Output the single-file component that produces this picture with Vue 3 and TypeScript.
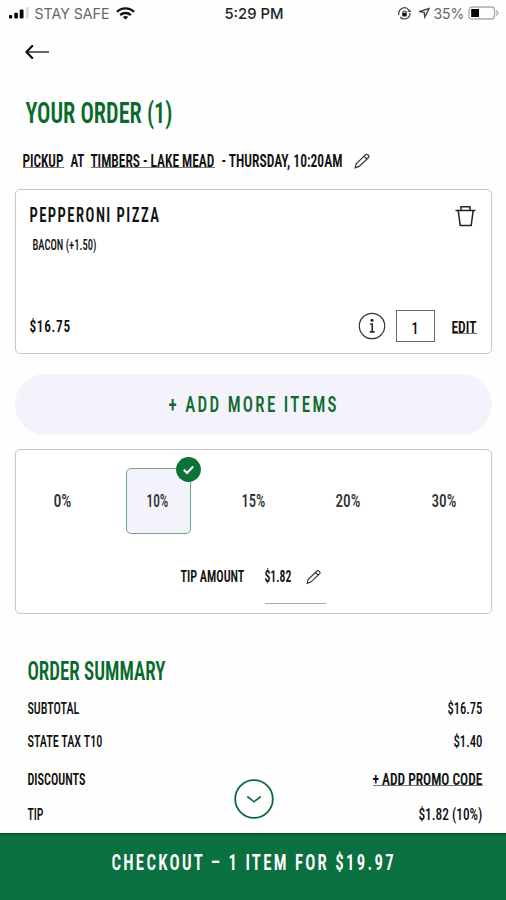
<script setup lang="ts">
import { h, ref } from 'vue'

interface LabelProps {
  text: string
  w: number
  cap: number
  track?: number
}

// Condensed label: its box is exactly the cap height of the text, fitted to width w.
const Label = (props: LabelProps) => {
  const size = props.cap / 0.711
  return h('svg', { class: 'label', width: props.w, height: props.cap }, [
    h(
      'text',
      {
        x: -0.6,
        y: props.cap,
        'font-size': size,
        'letter-spacing': props.track ?? 0,
        textLength: props.w + (props.track ?? 0) * 0.5,
        lengthAdjust: 'spacingAndGlyphs',
      },
      props.text,
    ),
  ])
}
Label.props = ['text', 'w', 'cap', 'track']

const tips = [
  { text: '0%', w: 18 },
  { text: '10%', w: 22 },
  { text: '15%', w: 24 },
  { text: '20%', w: 25 },
  { text: '30%', w: 25 },
]
const selected = ref(1)

const rows = [
  { key: 'subtotal', name: 'SUBTOTAL', nw: 52, value: '$16.75', vw: 35 },
  { key: 'tax', name: 'STATE TAX T10', nw: 75, value: '$1.40', vw: 29 },
  { key: 'discounts', name: 'DISCOUNTS', nw: 58, value: '+ ADD PROMO CODE', vw: 110, link: true },
  { key: 'gratuity', name: 'TIP', nw: 16, value: '$1.82 (10%)', vw: 64 },
]
</script>

<template>
  <div class="page">
    <header class="status">
      <div class="carrier">
        <svg width="20" height="12" viewBox="0 0 20 12">
          <rect x="0" y="8" width="3.2" height="3.5" rx="1" />
          <rect x="5.3" y="5.7" width="3.6" height="5.8" rx="1" />
          <rect x="10.7" y="2.5" width="3.8" height="9" rx="1" />
          <rect x="16.8" y="0" width="3" height="11.5" rx="1" fill="#dcdcdc" />
        </svg>
        <Label class="thin" text="STAY SAFE" :w="75" :cap="10.6" />
        <svg class="wifi" width="19" height="13" viewBox="0 0 19 13" fill="none" stroke="#111" stroke-width="2.3">
          <path d="M1 4.9C5.6.3 13.4.3 18 4.9M4.2 8.1c2.9-2.8 7.7-2.8 10.6 0" />
          <path d="M9.5 12.6 6.8 10c1.5-1.3 3.9-1.3 5.4 0Z" fill="#111" stroke="none" />
        </svg>
      </div>
      <Label class="time" text="5:29 PM" :w="59" :cap="10.6" />
      <div class="power">
        <svg class="lock" width="13" height="13" viewBox="0 0 13 13" fill="none" stroke="#444" stroke-width="1.2">
          <path d="M1 8A5.6 5.6 0 0 1 10.8 3M12 6a5.6 5.6 0 0 1-9.8 4" />
          <path d="m9 4.6 4 .6-1-3Z" fill="#444" stroke="none" />
          <path d="M4.9 6.2V5.6a1.6 1.6 0 0 1 3.2 0v.6" />
          <rect x="4.3" y="5.8" width="4.4" height="3.6" fill="#111" stroke="none" />
        </svg>
        <svg class="nav" width="12" height="12" viewBox="0 0 12 12" fill="none" stroke="#444" stroke-width="1.4">
          <path d="M1 4.6 11 1.6 6.8 10 6.2 5.4Z" />
        </svg>
        <Label class="thin pct" text="35%" :w="31" :cap="10.6" />
        <svg width="31" height="14" viewBox="0 0 31 14" fill="none" stroke="#aaa" stroke-width="1.3">
          <rect x="1" y="1" width="25.5" height="12" rx="3" />
          <path d="M28 4.5 30 7l-2 2.5" />
          <rect x="3.2" y="3" width="7.8" height="8" fill="#000" stroke="none" />
        </svg>
      </div>
    </header>

    <main class="content">
      <svg class="back" width="25" height="14" viewBox="0 0 25 14" fill="none" stroke="#111">
        <path d="M1.5 7H24" stroke="#666" stroke-width="2" />
        <path d="M7.2 1 1.5 7l5.7 6" stroke-width="2.2" stroke-linecap="round" />
      </svg>

      <h1 class="title"><Label text="YOUR ORDER (1)" :w="147" :cap="20.8" /></h1>

      <div class="pickup">
        <a class="link"><Label text="PICKUP" :w="41" :cap="12.6" /></a>
        <Label class="at" text="AT" :w="14" :cap="12.6" />
        <a class="link"><Label text="TIMBERS - LAKE MEAD" :w="124" :cap="12.6" /></a>
        <Label class="when" text="- THURSDAY, 10:20AM" :w="121" :cap="12.6" />
        <svg class="pencil" width="17" height="16" viewBox="0 0 17 16">
          <path d="m1.2 14.8 1-4L11.4 1.9q1.1-1.1 2.3-.2l.9.8q.9 1 0 2L5.2 13.4ZM10 3.2l3.2 3" />
        </svg>
      </div>

      <section class="card item">
        <div class="item-head">
          <Label text="PEPPERONI PIZZA" :w="130" :cap="13.8" :track="1.9" />
          <svg class="trash" width="21" height="22" viewBox="0 0 21 22" fill="none" stroke="#222" stroke-width="1.5">
            <path d="M.5 5.4h20M6 5V1.7h9V5M3.2 5.4l2 15.1h11l2-15.1" />
          </svg>
        </div>
        <Label class="extra" text="BACON (+1.50)" :w="64" :cap="10.2" />
        <div class="item-foot">
          <Label text="$16.75" :w="41" :cap="12.2" :track="0.9" />
          <svg class="info" width="28" height="28" viewBox="0 0 28 28" fill="none" stroke="#333">
            <circle cx="14" cy="14" r="12.7" stroke-width="1.2" />
            <path d="M12 12h2.2v7.5M11.7 19.8h5" stroke-width="1.7" />
            <circle cx="14" cy="8.2" r="1.5" fill="#222" stroke="none" />
          </svg>
          <div class="qty"><Label text="1" :w="7" :cap="11.5" /></div>
          <a class="link edit"><Label text="EDIT" :w="25" :cap="12" /></a>
        </div>
      </section>

      <button class="add"><Label text="+ ADD MORE ITEMS" :w="169" :cap="15.6" :track="3" /></button>

      <section class="card tip">
        <div class="tips">
          <div v-for="(t, i) in tips" :key="t.text" class="choice" :class="{ on: i === selected }" @click="selected = i">
            <Label :text="t.text" :w="t.w" :cap="12.4" />
            <svg v-if="i === selected" class="badge" width="25" height="25" viewBox="0 0 25 25" fill="none">
              <circle cx="12.5" cy="12.5" r="12.4" fill="#0b7338" />
              <path d="m7.8 12.8 3.2 3.2 6.2-6.4" stroke="#fff" stroke-width="2.2" />
            </svg>
          </div>
        </div>
        <div class="amount">
          <Label text="TIP AMOUNT" :w="64" :cap="12.2" />
          <div class="field">
            <Label text="$1.82" :w="27" :cap="12.2" />
            <svg class="pencil" width="16" height="16" viewBox="0 0 17 16">
              <path d="m1.2 14.8 1-4L11.4 1.9q1.1-1.1 2.3-.2l.9.8q.9 1 0 2L5.2 13.4ZM10 3.2l3.2 3" />
            </svg>
          </div>
        </div>
      </section>

      <section class="summary">
        <h2 class="title"><Label text="ORDER SUMMARY" :w="138" :cap="17.8" /></h2>
        <div v-for="r in rows" :key="r.key" class="row" :class="r.key">
          <Label :text="r.name" :w="r.nw" :cap="11.9" />
          <a :class="{ link: r.link }"><Label :text="r.value" :w="r.vw" :cap="11.9" /></a>
        </div>
      </section>

      <svg class="down" width="40" height="40" viewBox="0 0 40 40" stroke="#0e6b35">
        <circle cx="20" cy="20" r="18.8" fill="#fff" stroke-width="1.8" />
        <path d="m13.3 17.5 6.7 5.3 6.7-5.3" fill="none" stroke-width="1.6" />
      </svg>
    </main>

    <footer class="checkout">
      <Label text="CHECKOUT – 1 ITEM FOR $19.97" :w="283" :cap="15.8" :track="3" />
    </footer>
  </div>
</template>

<style>
body {
  margin: 0;
  background: #fff;
}
</style>

<style scoped>
.page {
  box-sizing: border-box;
  width: 506px;
  height: 900px;
  display: flex;
  flex-direction: column;
  overflow: hidden;
  background: #fefefe;
  color: #111;
  font-family: Roboto, "Liberation Sans", sans-serif;
  font-weight: 600;
  font-stretch: 75%;
}
svg {
  display: block;
  flex: none;
}
.label {
  overflow: visible;
  fill: currentColor;
}
.status {
  display: grid;
  grid-template-columns: 1fr auto 1fr;
  align-items: center;
  height: 26px;
  padding: 0 7px 0 9px;
  font-family: Inter, sans-serif;
  font-stretch: 100%;
}
.carrier,
.power {
  display: flex;
  align-items: center;
  gap: 6px;
}
.power {
  justify-content: flex-end;
}
.thin {
  font-weight: 400;
  color: #666;
}
.time {
  font-weight: 500;
  color: #222;
}
.lock {
  margin-right: 1px;
}
.pct {
  margin: 0 -3px 0 -2px;
}
.content {
  position: relative;
  flex: 1;
  min-height: 0;
  padding: 18.5px 14px 0 15px;
}
.back {
  margin-left: 10px;
}
.title {
  margin: 0;
  color: #0a6a2c;
  font-size: inherit;
  font-weight: 600;
}
h1.title {
  padding: 43px 0 0 11px;
}
.pickup {
  display: flex;
  align-items: flex-start;
  height: 34.7px;
  padding: 32px 0 0 7.5px;
}
.link {
  border-bottom: 1.5px solid #777;
  padding-bottom: 0.5px;
}
.at {
  margin: 0 6px 0 7px;
}
.when {
  margin: 0 11px 0 7px;
}
.pencil {
  margin-top: -1px;
  fill: none;
  stroke: #333;
  stroke-width: 1.2;
}
.card {
  box-sizing: border-box;
  border: 1.5px solid #c8c8c8;
  border-radius: 5px;
  background: #fff;
}
.item {
  display: flex;
  flex-direction: column;
  height: 165px;
  padding: 15px 14px 11px 14px;
}
.item-head {
  display: flex;
  justify-content: space-between;
  align-items: flex-start;
  height: 35px;
  padding-right: 1px;
}
.item-head .label {
  margin-top: 3.5px;
}
.extra {
  margin-left: 3px;
  font-weight: 500;
}
.item-foot {
  display: flex;
  align-items: center;
  margin-top: auto;
}
.info {
  margin-left: auto;
}
.qty {
  box-sizing: border-box;
  display: flex;
  align-items: center;
  justify-content: center;
  width: 39px;
  height: 32px;
  margin: 0 17px 0 10px;
  padding-top: 4px;
  border: 1.5px solid #666;
  font-weight: 500;
}
.edit {
  margin-top: 3px;
}
.add {
  display: flex;
  align-items: center;
  justify-content: center;
  width: 100%;
  height: 61px;
  margin: 20px 0 14.5px;
  padding: 0 0 2px;
  border: 0;
  border-radius: 31px;
  background: #f4f2fa;
  color: #0a6a2c;
  font-family: inherit;
  font-weight: 500;
  font-stretch: inherit;
}
.tip {
  height: 165px;
  padding-top: 18px;
}
.tips {
  display: grid;
  grid-template-columns: repeat(5, 95.4px);
  justify-content: center;
  justify-items: center;
}
.choice {
  box-sizing: border-box;
  position: relative;
  display: flex;
  align-items: center;
  justify-content: center;
  width: 65px;
  height: 66px;
  border: 1.5px solid transparent;
  border-radius: 5px;
  color: #333;
  font-weight: 500;
}
.choice.on {
  border-color: #6fa58c;
  background: #f4f2fa;
}
.badge {
  position: absolute;
  top: -12px;
  right: -11.5px;
}
.amount {
  display: flex;
  justify-content: center;
  gap: 20px;
  padding-top: 35.5px;
}
.field {
  display: flex;
  justify-content: space-between;
  box-sizing: border-box;
  width: 61px;
  height: 34px;
  padding-right: 4px;
  border-bottom: 1.5px solid #aaa;
}
.summary {
  padding: 48px 9.5px 0 12.5px;
}
.summary .title {
  padding-bottom: 21.3px;
}
.row {
  display: flex;
  justify-content: space-between;
  align-items: flex-start;
  height: 33px;
  font-weight: 500;
}
.row.tax {
  height: 38px;
}
.row.discounts {
  height: 35px;
  font-weight: 600;
}
.down {
  position: absolute;
  left: 233.5px;
  bottom: 14.5px;
}
.checkout {
  box-sizing: border-box;
  display: flex;
  justify-content: center;
  flex: none;
  height: 67px;
  padding-top: 19px;
  border-top: 2px solid #0a5a26;
  background: #0b7040;
  color: #fff;
}
</style>
